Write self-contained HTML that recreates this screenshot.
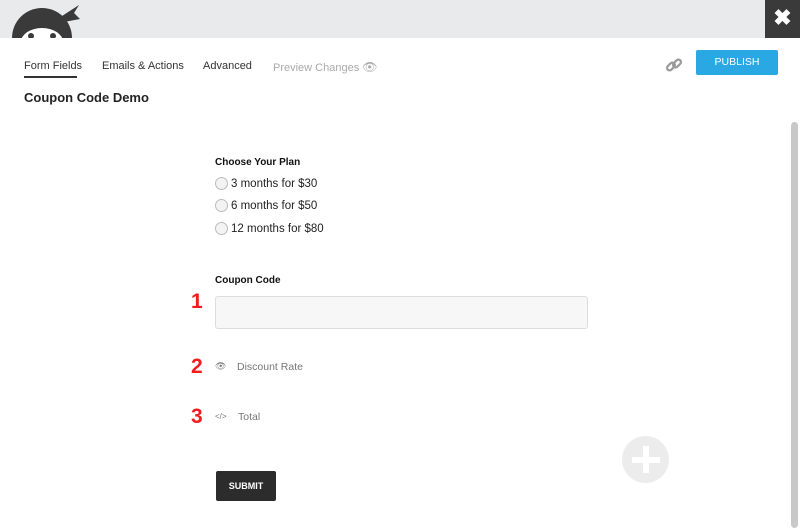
<html><head><style>
body{margin:0;width:800px;height:528px;background:#fff;font-family:"Liberation Sans",sans-serif;position:relative;overflow:hidden;color:#222}
.a{position:absolute}
.tab{position:absolute;top:60px;font-size:11px;color:#333}
.lbl{font-size:10px;font-weight:bold;color:#111}
.opt{font-size:11.5px;color:#222;display:flex;align-items:center}
.rad{width:11px;height:11px;border:1px solid #bbb;border-radius:50%;margin-right:3px;background:#f3f3f3}
.num{position:absolute;left:191px;color:#f21c1c;font-weight:bold;font-size:21px}
</style></head><body>
<div class="a" style="left:0;top:0;width:800px;height:38px;background:#e9eaec"></div>
<svg class="a" style="left:0;top:0" width="90" height="38" viewBox="0 0 90 38">
<circle cx="42" cy="38" r="30" fill="#3a3a3a"/>
<path d="M62 16 L79 5 L74 13 L80 19 L64 22 Z" fill="#3a3a3a"/>
<ellipse cx="42" cy="42" rx="21" ry="14" fill="#fff"/>
<circle cx="31" cy="36" r="3" fill="#3a3a3a"/><circle cx="53" cy="36" r="3" fill="#3a3a3a"/>
</svg>
<div class="a" style="left:765px;top:0;width:35px;height:38px;background:#3a3a3a;color:#fff;font-size:22px;font-weight:bold;text-align:center;line-height:36px">✖</div>
<div class="tab" style="left:24px">Form Fields</div>
<div class="a" style="left:24px;top:76px;width:53px;height:2px;background:#333"></div>
<div class="tab" style="left:102px">Emails &amp; Actions</div>
<div class="tab" style="left:203px">Advanced</div>
<div class="tab" style="left:273px;color:#aaa">Preview Changes <span style="font-size:12px">👁</span></div>
<svg class="a" style="left:665px;top:56px" width="18" height="18" viewBox="0 0 18 18" fill="none" stroke="#999" stroke-width="2.2"><rect x="1.5" y="8" width="9" height="5" rx="2.5" transform="rotate(-45 6 10.5)"/><rect x="7.5" y="5" width="9" height="5" rx="2.5" transform="rotate(-45 12 7.5)"/></svg>
<div class="a" style="left:696px;top:50px;width:82px;height:25px;background:#29a8e4;border-radius:2px;color:#fff;font-size:10.5px;text-align:center;line-height:25px">PUBLISH</div>
<div class="a" style="left:24px;top:90px;font-size:13px;font-weight:bold;color:#222">Coupon Code Demo</div>
<div class="a" style="left:791px;top:122px;width:7px;height:406px;background:#c8c8c8;border-radius:4px"></div>
<div class="a lbl" style="left:215px;top:157px">Choose Your Plan</div>
<div class="a opt" style="left:215px;top:177px"><span class="rad"></span>3 months for $30</div>
<div class="a opt" style="left:215px;top:199px"><span class="rad"></span>6 months for $50</div>
<div class="a opt" style="left:215px;top:222px"><span class="rad"></span>12 months for $80</div>
<div class="a lbl" style="left:215px;top:275px">Coupon Code</div>
<div class="a" style="left:215px;top:296px;width:371px;height:31px;border:1px solid #ddd;border-radius:3px;background:#f7f7f7"></div>
<div class="num" style="top:290px">1</div>
<div class="num" style="top:355px">2</div>
<div class="num" style="top:405px">3</div>
<div class="a" style="left:215px;top:361px;font-size:9px;color:#777">👁</div>
<div class="a" style="left:237px;top:361px;font-size:10.5px;color:#777">Discount Rate</div>
<div class="a" style="left:215px;top:412px;font-size:8px;color:#777">&lt;/&gt;</div>
<div class="a" style="left:238px;top:411px;font-size:10.5px;color:#777">Total</div>
<div class="a" style="left:622px;top:436px;width:47px;height:47px;border-radius:50%;background:#ececec"></div>
<div class="a" style="left:643px;top:446px;width:6px;height:27px;background:#fff"></div>
<div class="a" style="left:632px;top:457px;width:28px;height:6px;background:#fff"></div>
<div class="a" style="left:216px;top:471px;width:60px;height:30px;background:#2c2c2c;border-radius:2px;color:#fff;font-size:9px;font-weight:bold;text-align:center;line-height:30px">SUBMIT</div>
</body></html>
